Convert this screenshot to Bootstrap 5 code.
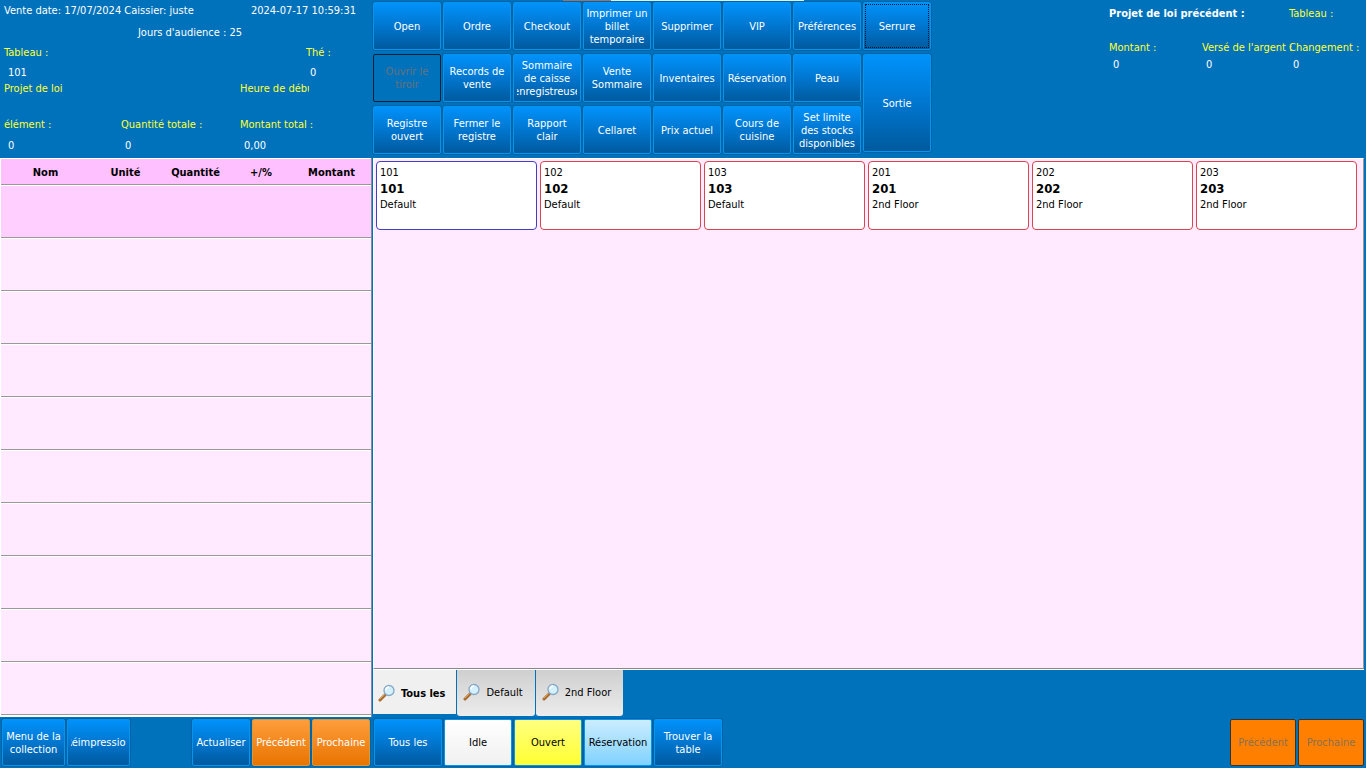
<!DOCTYPE html>
<html lang="fr">
<head>
<meta charset="utf-8">
<meta name="viewport" content="width=device-width, initial-scale=1">
<title>Caisse</title>
<link href="https://cdn.jsdelivr.net/npm/bootstrap@5.3.0/dist/css/bootstrap.min.css" rel="stylesheet">
<style>
  body { background: #0072bc; color: #fff; font-family: "DejaVu Sans Condensed", "Noto Sans", sans-serif; font-size: 11px; line-height: 16px; }
  .side { width: 372px; }
  .main-col { min-width: 0; }
  .top { height: 158px; }
  .lbl { color: #ff3; }
  .clip { overflow: hidden; white-space: nowrap; width: 69px; }
  .info-grid { grid-template-columns: 117px 119px 66px 1fr; grid-template-rows: 22px 20px 20px 16px 36px 21px 16px; padding: 3px 0 0 4px; }
  .span-all { grid-column: 1 / -1; }
  .span-3 { grid-column: 1 / 4; }
  .span-2 { grid-column: 1 / 3; }
  .from-3 { grid-column: 3 / 5; }
  .prev-grid { grid-template-columns: 93px 87px 1fr; grid-template-rows: 34px 17px 16px; padding-top: 6px; width: 257px; white-space: nowrap; }

  /* function keys */
  .key { --bs-btn-padding-x: 3px; --bs-btn-padding-y: 0; --bs-btn-font-size: 11px; --bs-btn-line-height: 13px; --bs-btn-border-radius: 2px;
    --bs-btn-color: #fff; --bs-btn-hover-color: #fff; --bs-btn-active-color: #fff; --bs-btn-border-color: #0794ea; --bs-btn-hover-border-color: #5cc0ff;
    display: flex; align-items: center; justify-content: center; overflow: hidden; white-space: nowrap;
    background: linear-gradient(#0092fb, #0076cf 50%, #005a9e); box-shadow: 0 0 0 1px #0065a8; }
  .key:disabled { opacity: 1; color: #68717a; background: #0072bc; border-color: #05202f; box-shadow: none; }
  .key-orange { --bs-btn-border-color: #d69a3c; background: linear-gradient(#ff9d3c, #e87400); }
  .key-orange:disabled { color: #8a7050; background: #ff8000; border-color: #3a3325; }
  .key-dark { --bs-btn-color: #000; --bs-btn-hover-color: #000; --bs-btn-active-color: #000; }
  .key-white { background: linear-gradient(#fff, #f0f0f0); }
  .key-yellow { background: linear-gradient(#ffff80, #ffff32); }
  .key-sky { background: linear-gradient(#ccedff, #80d2ff); }
  .key-focus { outline: 1px dotted #02162a; outline-offset: -3px; }
  .cut { display: flex; justify-content: center; overflow: hidden; width: 60px; }
  .keypad { grid-template-columns: repeat(8, 68px); grid-auto-rows: 48px; gap: 4px 2px; padding: 2px 0 0 1px; }
  .tall { grid-column: 8; grid-row: 2 / span 2; margin-bottom: 2px; }
  .backdrop-strip { top: 0; left: 191px; width: 241px; height: 1px; background: linear-gradient(90deg, #9c7468 48px, #d8f0fa 48px); }

  /* ticket */
  .ticket { table-layout: fixed; width: 371px; border-collapse: separate; border-spacing: 0; border: solid #fff; border-width: 1px 0 2px 1px; color: #000; }
  .ticket th { height: 26px; padding: 2px 0 0; text-align: center; background: #ffc0ff; border-bottom: 1px solid #999; }
  .ticket td { height: 53px; padding: 0; background: #ffeaff; border-top: 1px solid #fff; border-bottom: 1px solid #999; }
  .ticket .current td { background: #ffd0ff; }
  .ticket-box { border-right: 1px solid #8090a0; }
  .c-name { width: 89px; } .c-unit { width: 71px; } .c-qty { width: 69px; } .c-mod { width: 62px; }

  /* dining room */
  .floor { background: #ffeaff; border: 1px solid #fff; border-right: 1px solid #999; border-bottom: 1px solid #888; margin: 0 2px 0 1px; padding: 2px; gap: 3px; align-content: flex-start; }
  .seat { width: 161px; height: 69px; padding: 3px; background: #fff; border: 1px solid #d9444f; border-radius: 4px; color: #000; text-align: left; line-height: 15px; }
  .seat strong { font-size: 13px; line-height: 17px; }
  .seat-open { border-color: #4040c0; }
  .zones { border-top: 1px solid #fff; height: 48px; margin: 0 2px 0 1px; gap: 1px; }
  .zone { height: 46px; color: #000; border: 0; border-radius: 0 0 3px 3px; background: linear-gradient(#cfcfcf, #ececec); display: flex; align-items: center; padding: 0 12px 0 5px; gap: 4px; }
  .zone svg { margin-top: -2px; }
  .zone.active { background: #f0f0f0; font-weight: bold; height: 44px; padding: 4px 11px 0 4px; border-radius: 0; }
  .bar { height: 51px; padding: 2px; gap: 2px; }
  .bar .key { width: 68px; height: 47px; }
  .bar .w-menu { width: 63px; }
  .bar .w-page { width: 58px; padding: 0; }
  .bar .w-nav { width: 66px; }
</style>
</head>
<body>
<svg class="d-none" aria-hidden="true">
  <symbol id="lens" viewBox="0 0 18 18">
    <path d="M2 16 7 11" stroke="#a5672a" stroke-width="3" stroke-linecap="round"/>
    <path d="M2 15.200 6.500 10.700" stroke="#e8b068" stroke-width="1" stroke-linecap="round"/>
    <circle cx="11" cy="6.500" r="5" fill="#d4f0fc" stroke="#86a8c8" stroke-width="1.300"/>
    <path d="M8 6a3 3 0 0 1 3-3" stroke="#fff" stroke-width="1.500" fill="none"/>
  </symbol>
</svg>
<div class="d-flex min-vh-100">
  <aside class="side d-flex flex-column flex-shrink-0">
    <div class="top info-grid d-grid text-nowrap">
      <div class="span-all d-flex justify-content-between pe-3"><span>Vente date: 17/07/2024 Caissier: juste</span><span>2024-07-17 10:59:31</span></div>
      <div class="span-all text-center ps-1">Jours d'audience : 25</div>
      <span class="lbl span-3">Tableau :</span><span class="lbl">Thé :</span>
      <span class="ps-1 span-3">101</span><span class="ps-1">0</span>
      <span class="lbl span-2">Projet de loi</span><span class="lbl from-3 clip">Heure de début</span>
      <span class="lbl">élément :</span><span class="lbl">Quantité totale :</span><span class="lbl from-3">Montant total :</span>
      <span class="ps-1">0</span><span class="ps-1">0</span><span class="ps-1 from-3">0,00</span>
    </div>
    <div class="ticket-box flex-grow-1">
      <table class="ticket">
        <colgroup><col class="c-name"><col class="c-unit"><col class="c-qty"><col class="c-mod"><col></colgroup>
        <thead><tr><th scope="col">Nom</th><th scope="col">Unité</th><th scope="col">Quantité</th><th scope="col">+/%</th><th scope="col">Montant</th></tr></thead>
        <tbody>
          <tr class="current"><td colspan="5"></td></tr>
          <tr><td colspan="5"></td></tr><tr><td colspan="5"></td></tr><tr><td colspan="5"></td></tr>
          <tr><td colspan="5"></td></tr><tr><td colspan="5"></td></tr><tr><td colspan="5"></td></tr>
          <tr><td colspan="5"></td></tr><tr><td colspan="5"></td></tr><tr><td colspan="5"></td></tr>
        </tbody>
      </table>
    </div>
    <div class="bar d-flex">
      <button type="button" class="btn key w-menu">Menu de la<br>collection</button>
      <button type="button" class="btn key w-menu"><span class="cut">Réimpression</span></button>
      <button type="button" class="btn key w-page ms-auto">Actualiser</button>
      <button type="button" class="btn key key-orange w-page">Précédent</button>
      <button type="button" class="btn key key-orange w-page">Prochaine</button>
    </div>
  </aside>

  <main class="main-col d-flex flex-column flex-grow-1">
    <div class="top d-flex justify-content-between position-relative">
      <div class="keypad d-grid align-content-start">
        <button type="button" class="btn key">Open</button>
        <button type="button" class="btn key">Ordre</button>
        <button type="button" class="btn key">Checkout</button>
        <button type="button" class="btn key">Imprimer un<br>billet<br>temporaire</button>
        <button type="button" class="btn key">Supprimer</button>
        <button type="button" class="btn key">VIP</button>
        <button type="button" class="btn key">Préférences</button>
        <button type="button" class="btn key key-focus">Serrure</button>
        <button type="button" class="btn key" disabled>Ouvrir le<br>tiroir</button>
        <button type="button" class="btn key">Records de<br>vente</button>
        <button type="button" class="btn key"><span>Sommaire<br>de caisse<span class="cut">enregistreuse</span></span></button>
        <button type="button" class="btn key">Vente<br>Sommaire</button>
        <button type="button" class="btn key">Inventaires</button>
        <button type="button" class="btn key">Réservation</button>
        <button type="button" class="btn key">Peau</button>
        <button type="button" class="btn key tall">Sortie</button>
        <button type="button" class="btn key">Registre<br>ouvert</button>
        <button type="button" class="btn key">Fermer le<br>registre</button>
        <button type="button" class="btn key">Rapport<br>clair</button>
        <button type="button" class="btn key">Cellaret</button>
        <button type="button" class="btn key">Prix actuel</button>
        <button type="button" class="btn key">Cours de<br>cuisine</button>
        <button type="button" class="btn key">Set limite<br>des stocks<br>disponibles</button>
      </div>
      <div class="backdrop-strip position-absolute"></div>
      <div class="prev-grid d-grid align-content-start">
        <strong class="span-2">Projet de loi précédent :</strong><span class="lbl">Tableau :</span>
        <span class="lbl">Montant :</span><span class="lbl">Versé de l'argent :</span><span class="lbl">Changement :</span>
        <span class="ps-1">0</span><span class="ps-1">0</span><span class="ps-1">0</span>
      </div>
    </div>
    <div class="floor d-flex flex-wrap flex-grow-1">
      <button type="button" class="seat seat-open d-flex flex-column"><span>101</span><strong>101</strong><span>Default</span></button>
      <button type="button" class="seat d-flex flex-column"><span>102</span><strong>102</strong><span>Default</span></button>
      <button type="button" class="seat d-flex flex-column"><span>103</span><strong>103</strong><span>Default</span></button>
      <button type="button" class="seat d-flex flex-column"><span>201</span><strong>201</strong><span>2nd Floor</span></button>
      <button type="button" class="seat d-flex flex-column"><span>202</span><strong>202</strong><span>2nd Floor</span></button>
      <button type="button" class="seat d-flex flex-column"><span>203</span><strong>203</strong><span>2nd Floor</span></button>
    </div>
    <div class="zones d-flex" role="tablist">
      <button type="button" class="zone active" role="tab" aria-selected="true"><svg width="20" height="18"><use href="#lens"/></svg>Tous les</button>
      <button type="button" class="zone" role="tab"><svg width="20" height="18"><use href="#lens"/></svg>Default</button>
      <button type="button" class="zone" role="tab"><svg width="20" height="18"><use href="#lens"/></svg>2nd Floor</button>
    </div>
    <div class="bar d-flex">
      <button type="button" class="btn key">Tous les</button>
      <button type="button" class="btn key key-dark key-white">Idle</button>
      <button type="button" class="btn key key-dark key-yellow">Ouvert</button>
      <button type="button" class="btn key key-dark key-sky">Réservation</button>
      <button type="button" class="btn key">Trouver la<br>table</button>
      <button type="button" class="btn key key-orange w-nav ms-auto" disabled>Précédent</button>
      <button type="button" class="btn key key-orange w-nav" disabled>Prochaine</button>
    </div>
  </main>
</div>
<script src="https://cdn.jsdelivr.net/npm/bootstrap@5.3.0/dist/js/bootstrap.bundle.min.js"></script>
</body>
</html>
